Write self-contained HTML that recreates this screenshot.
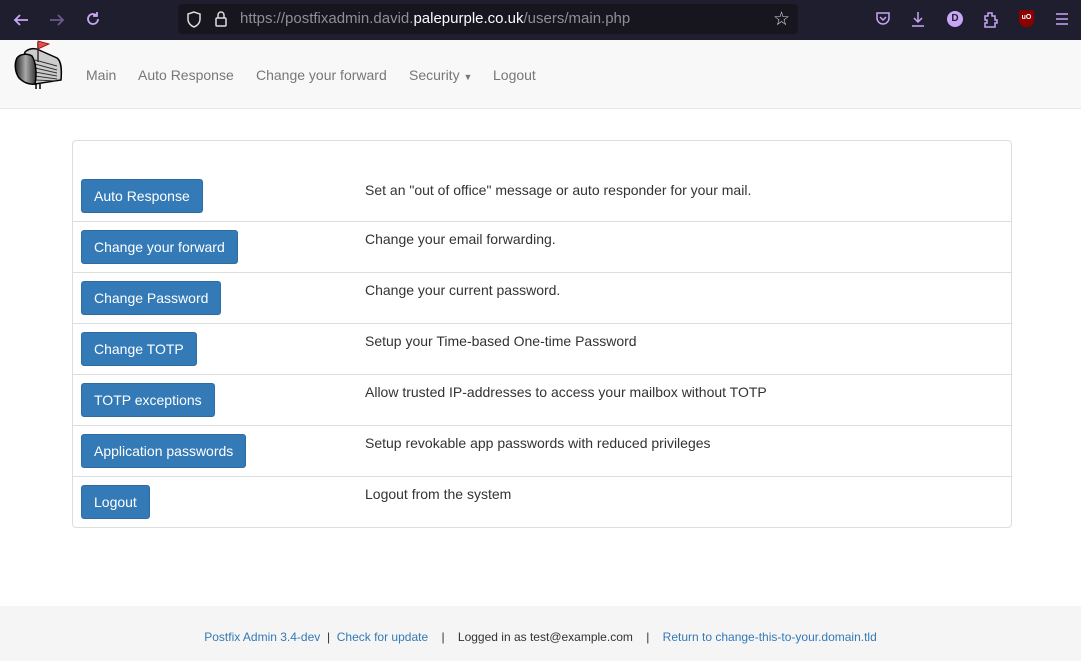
<!DOCTYPE html>
<html><head><meta charset="utf-8"><style>
*{box-sizing:border-box;margin:0;padding:0}
body{width:1081px;height:661px;overflow:hidden;font-family:"Liberation Sans",sans-serif;font-size:14px;color:#333;background:#fff;position:relative}
.bar{height:40px;background:#1f1e2f;position:relative}
.url{position:absolute;left:178px;top:4px;width:620px;height:30px;background:#17161f;border-radius:4px;color:#8f8d9a;font-size:15px;line-height:30px;padding-left:62px}
.url b{color:#fbfbfe;font-weight:normal}
.ic{position:absolute;color:#c9a6f5}
.nav{position:absolute;top:40px;left:0;right:0;height:69px;background:#f8f8f8;border-bottom:1px solid #e7e7e7}
.nav a{position:absolute;top:27px;color:#777;font-size:14px;text-decoration:none}
.panel{position:absolute;left:72px;top:140px;width:940px;height:388px;border:1px solid #ddd;border-radius:4px}
.row{position:absolute;left:0;right:0;height:51px;border-top:1px solid #ddd}
.btn{position:absolute;left:8px;top:8px;height:34px;background:#337ab7;border:1px solid #2e6da4;border-radius:3px;color:#fff;font-size:14px;line-height:33px;padding:0 12px}
.desc{position:absolute;left:292px;top:9px;font-size:14px}
.foot{position:absolute;top:606px;left:0;right:0;height:55px;background:#f5f5f5;font-size:12px;text-align:center;line-height:63px;color:#333}
.foot a{color:#337ab7;text-decoration:none}
</style></head><body>
<div class="bar">
<svg class="ic" style="left:12px;top:11px" width="18" height="18" viewBox="0 0 18 18" fill="none" stroke="#c9a6f5" stroke-width="1.8"><path d="M16 9H3M8 4L3 9l5 5"/></svg>
<svg class="ic" style="left:48px;top:11px" width="18" height="18" viewBox="0 0 18 18" fill="none" stroke="#6d5a8a" stroke-width="1.8"><path d="M2 9h13M10 4l5 5-5 5"/></svg>
<svg class="ic" style="left:84px;top:10px" width="18" height="18" viewBox="0 0 18 18" fill="none" stroke="#c9a6f5" stroke-width="1.8"><path d="M14 9a5 5 0 1 1-2-4M13 2v4H9"/></svg>
<div class="url">https://postfixadmin.david.<b>palepurple.co.uk</b>/users/main.php</div>
<svg class="ic" style="left:186px;top:11px" width="16" height="18" viewBox="0 0 16 18" fill="none" stroke="#ddd" stroke-width="1.5"><path d="M8 1L2 3v5c0 4 3 7 6 8 3-1 6-4 6-8V3z"/></svg>
<svg class="ic" style="left:214px;top:10px" width="14" height="18" viewBox="0 0 14 18" fill="none" stroke="#ddd" stroke-width="1.5"><rect x="2" y="8" width="10" height="8" rx="1"/><path d="M4 8V5a3 3 0 0 1 6 0v3"/></svg>
<div class="ic" style="left:773px;top:8px;font-size:19px;color:#ddd">☆</div>
<svg class="ic" style="left:875px;top:11px" width="16" height="16" viewBox="0 0 16 16" fill="none" stroke="#c9a6f5" stroke-width="1.5"><path d="M2 2h12v5a6 6 0 0 1-12 0z M5 6l3 3 3-3"/></svg>
<svg class="ic" style="left:910px;top:10px" width="16" height="18" viewBox="0 0 16 18" fill="none" stroke="#c9a6f5" stroke-width="1.5"><path d="M8 2v10M4 8l4 4 4-4M2 16h12"/></svg>
<div class="ic" style="left:947px;top:11px;width:16px;height:16px;border-radius:50%;background:#c9a6f5;color:#1f1e2f;font-size:10px;font-weight:bold;text-align:center;line-height:16px">D</div>
<svg class="ic" style="left:983px;top:10px" width="16" height="18" viewBox="0 0 16 18" fill="none" stroke="#c9a6f5" stroke-width="1.5"><path d="M2 6h3V3h4v3h3v4h2v3h-2v4H2v-4h2v-3H2z"/></svg>
<div class="ic" style="left:1019px;top:10px;width:15px;height:17px;background:#8b0000;border-radius:2px 2px 7px 7px;color:#fff;font-size:7px;text-align:center;line-height:16px;font-weight:bold">uO</div>
<svg class="ic" style="left:1054px;top:12px" width="16" height="14" viewBox="0 0 16 14" stroke="#c9a6f5" stroke-width="1.6"><path d="M2 2h12M2 7h12M2 12h12"/></svg>
</div>
<div class="nav">
<svg style="position:absolute;left:5px;top:-2px" width="60" height="55" viewBox="0 0 60 55">
<defs><linearGradient id="g" x1="0" x2="1"><stop offset="0" stop-color="#222"/><stop offset=".5" stop-color="#aaa"/><stop offset="1" stop-color="#333"/></linearGradient></defs>
<path d="M20 14c4-4 10-4 14-2l18 8c4 3 5 10 4 22L30 46 14 38z" fill="#ccc" stroke="#000" stroke-width="1.5"/>
<path d="M30 22l22 6M30 26l22 6M30 30l22 5M30 34l22 4M30 38l22 3M30 42l22 1" stroke="#333" stroke-width="1"/>
<path d="M12 20c3-4 10-5 15-2 4 6 5 18 3 28-6 1-12-2-16-6-4-6-5-14-2-20z" fill="url(#g)" stroke="#000" stroke-width="1.5"/>
<path d="M33 4v20" stroke="#333" stroke-width="1.5"/>
<path d="M33 3l11 3-11 5z" fill="#d9534f" stroke="#900" stroke-width=".8"/>
<path d="M31 46v5M35 46v5" stroke="#000" stroke-width="1.5"/>
</svg>
<a style="left:86px">Main</a><a style="left:138px">Auto Response</a><a style="left:256px">Change your forward</a><a style="left:409px">Security <span style="font-size:9px">▼</span></a><a style="left:493px">Logout</a>
</div>
<div class="panel">
<div class="row" style="top:0;height:81px;border-top:none"><div class="btn" style="top:38px">Auto Response</div><div class="desc" style="top:41px">Set an "out of office" message or auto responder for your mail.</div></div>
<div class="row" style="top:80px"><div class="btn">Change your forward</div><div class="desc">Change your email forwarding.</div></div>
<div class="row" style="top:131px"><div class="btn">Change Password</div><div class="desc">Change your current password.</div></div>
<div class="row" style="top:182px"><div class="btn">Change TOTP</div><div class="desc">Setup your Time-based One-time Password</div></div>
<div class="row" style="top:233px"><div class="btn">TOTP exceptions</div><div class="desc">Allow trusted IP-addresses to access your mailbox without TOTP</div></div>
<div class="row" style="top:284px"><div class="btn">Application passwords</div><div class="desc">Setup revokable app passwords with reduced privileges</div></div>
<div class="row" style="top:335px"><div class="btn">Logout</div><div class="desc">Logout from the system</div></div>
</div>
<div class="foot"><a>Postfix Admin 3.4-dev</a> &nbsp;|&nbsp; <a>Check for update</a> &nbsp;&nbsp;&nbsp;|&nbsp;&nbsp;&nbsp; Logged in as test@example.com &nbsp;&nbsp;&nbsp;|&nbsp;&nbsp;&nbsp; <a>Return to change-this-to-your.domain.tld</a></div>
</body></html>
